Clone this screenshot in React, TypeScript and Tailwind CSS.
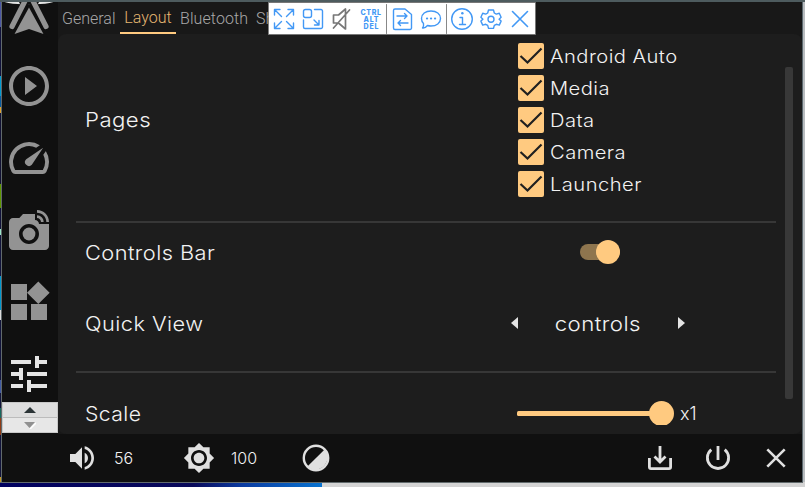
import React from "react";
import {
  MdPlayCircleOutline, MdSpeed, MdLinkedCamera, MdWidgets, MdTune, MdVolumeUp, MdBrightness7,
} from "react-icons/md";

const body = "font-[Inter,'Liberation_Sans',sans-serif] font-[330] text-[#f2f2f2] whitespace-nowrap";

function AutoLogo() {
  return (
    <svg width="56" height="36" viewBox="0 0 56 36" className="block shrink-0">
      <ellipse cx="27" cy="-3" rx="29" ry="5.500" fill="#e4e4e4" />
      <path d="M17 0h20l-4 8-6-6-6 6z" fill="#101010" />
      <path d="M23.500-2L10 24.500M30.500-2L44 24.500" stroke="#939393" strokeWidth="5.200" strokeLinecap="round" />
      <path d="M27 5.500L41.500 32 27 27 12.500 32z" fill="#939393" stroke="#101010" strokeWidth="4" paintOrder="stroke" />
    </svg>
  );
}

function Sidebar() {
  return (
    <nav className="flex w-14 shrink-0 flex-col bg-[#101010] text-[#939393]">
      <div className="h-[60px] shrink-0 overflow-hidden"><AutoLogo /></div>
      <div className="flex flex-col items-center gap-6 pr-[2px]">
        <MdPlayCircleOutline size={48} />
        <MdSpeed size={48} />
        <MdLinkedCamera size={48} />
        <MdWidgets size={48} />
        <MdTune size={48} className="text-[#e4e4e4]" />
      </div>
      <div className="mt-1 flex h-[31px] shrink-0 flex-col border border-[#c8c8c8]">
        <div className="flex flex-1 items-center justify-center border-b border-[#bcbcbc] bg-[#dedede] pr-px">
          <svg width="12" height="6"><path d="M0 6L6 0l6 6z" fill="#2b3436" /></svg>
        </div>
        <div className="flex flex-1 items-center justify-center bg-[#e7e7e7]">
          <svg width="12" height="7"><path d="M6 7l6-6" stroke="#fff" strokeWidth="1.500" /><path d="M0 0h11L5.500 6z" fill="#909090" /></svg>
        </div>
      </div>
    </nav>
  );
}

function Tabs() {
  return (
    <div className="flex h-8 shrink-0 rounded-tl-lg bg-[#181818] pl-1 font-[Roboto,sans-serif] text-base leading-[33px] font-light whitespace-nowrap text-[#a8a8a8]">
      <span className="w-[58px]">General</span>
      <span className="flex w-14 justify-center border-b-2 border-[#ffca80] leading-[32px] text-[#e5b672]">Layout</span>
      <span className="w-20 pl-1 tracking-[0.1px]">Bluetooth</span>
      <span>Shortcuts</span>
    </div>
  );
}

function RemoteToolbar() {
  return (
    <svg width="268" height="33" viewBox="0 0 268 33" className="absolute top-[2px] left-[268px]" fill="none" stroke="#4298f5" strokeWidth="1.400" strokeLinecap="round" strokeLinejoin="round">
      <rect x=".5" y=".5" width="267" height="32" fill="#fff" stroke="#777" strokeWidth="1" />
      <g transform="translate(0 1)">
        <path d="M6.500 12V6.500H12M6.500 6.500l7 7M20 6.500h5.500V12M25.500 6.500l-7 7M6.500 20v5.500H12M6.500 25.500l7-7M20 25.500h5.500V20M25.500 25.500l-7-7" />
        <path d="M46.500 6.500H53a1.500 1.500 0 0 1 1.500 1.500v16a1.500 1.500 0 0 1-1.500 1.500H37a1.500 1.500 0 0 1-1.500-1.500v-7M46 17l5 5M51 17.500V22h-4.500" />
        <rect x="35.500" y="6.500" width="8" height="8" rx="2" />
        <path d="M65.500 12h5l7-6v20l-7-6h-5zM81.500 7l-16 18" stroke="#777" strokeWidth="1.700" />
        <g fill="#4298f5" stroke="none" fontFamily="Inter" fontSize="7" fontWeight="800">
          <text x="92.500" y="11.500" textLength="20.500">CTRL</text>
          <text x="95.500" y="18.500" textLength="15">ALT</text>
          <text x="95.500" y="25.500" textLength="15">DEL</text>
        </g>
        <path d="M118.500 1.500v29M178.500 1.500v29" stroke="#888" strokeWidth="1" />
        <path d="M127 6h10l6.500 5.500V25a1.500 1.500 0 0 1-1.500 1.500h-15a1.500 1.500 0 0 1-1.500-1.500V7.500A1.500 1.500 0 0 1 127 6zM129 13h10l-2.500-2.500M139 13l-2.500 2.500M140 20h-10l2.500-2.500M130 20l2.500 2.500" />
        <path d="M163 8c5.500 0 9.500 3 9.500 7.500S168.500 23 163 23q-2 0-3.500-.5Q157 25.500 154.500 25q1.500-2 1-4.500Q153.500 18.500 153.500 15.500C153.500 11 157.500 8 163 8z" />
        <path d="M159 15.500h.1M163 15.500h.1M167 15.500h.1" strokeWidth="2.200" />
        <circle cx="194" cy="16" r="10.300" />
        <path d="M194.300 10.300h.1" strokeWidth="2.400" /><path d="M192 14.500h2.500v7M191.500 21.500h6" />
        <path d="M220.500 7h5l.8 3 2 1.100 3-.8 1.800 4-2 1.900 2 1.900-1.800 4-3-.8-2 1.100-.8 3h-5l-.8-3-2-1.100-3 .8-1.800-4 2-1.900-2-1.900 1.800-4 3 .8 2-1.100z" />
        <circle cx="223" cy="16.200" r="3" />
        <path d="M244.500 8.500l15 15M259.500 8.500l-15 15" strokeWidth="1.600" />
      </g>
    </svg>
  );
}

const pages = ["Android Auto", "Media", "Data", "Camera", "Launcher"];

function Settings() {
  return (
    <main className="flex h-[400px] overflow-hidden rounded-lg bg-[#1d1d1d]">
      <div className={"flex w-[727px] shrink-0 flex-col pl-[18px] text-[20px] " + body}>
        <section className="flex h-[187px] w-[700px] shrink-0 pl-[9px]">
          <span className="w-[433px] pt-[71px] leading-[30px] tracking-[0.4px]"><span className="inline-block origin-left scale-x-[1.11]">Pages</span></span>
          <div className="flex flex-col gap-[6px] pt-[9px]">
            {pages.map((p) => (
              <div key={p} className="flex h-[26px] items-center gap-[6px] text-[18px]">
                <span className="flex size-[26px] items-center justify-center rounded-[2px] bg-[#ffca80]">
                  <svg width="26" height="26" fill="none" stroke="#202020" strokeWidth="2.200"><path d="M2.500 13l7 6.500L23.500 5.500" /></svg>
                </span>
                <span className="inline-block origin-left scale-x-[1.12] tracking-[0.4px]">{p}</span>
              </div>
            ))}
          </div>
        </section>
        <div className="h-[2px] w-[700px] shrink-0 bg-[#373737]" />
        <section className="flex h-[58px] shrink-0 items-center pl-[9px]">
          <span className="w-[495px] pt-px tracking-[0.4px]"><span className="inline-block origin-left scale-x-[1.09]">Controls Bar</span></span>
          <div className="flex h-4 w-10 items-center justify-end rounded-full bg-[#8e754e]">
            <span className="size-6 shrink-0 rounded-full bg-[#ffca80]" />
          </div>
        </section>
        <section className="flex h-[90px] shrink-0 items-center pb-[6px] pl-[9px]">
          <span className="w-[426px] pt-px tracking-[0.4px]"><span className="inline-block origin-left scale-x-[1.09]">Quick View</span></span>
          <svg width="7" height="12"><path d="M7 0v12L0 6z" fill="#e4e4e4" /></svg>
          <span className="w-[160px] pt-px text-center tracking-[0.4px]"><span className="inline-block scale-x-[1.11]">controls</span></span>
          <svg width="7" height="12"><path d="M0 0v12l7-6z" fill="#e4e4e4" /></svg>
        </section>
        <div className="h-[2px] w-[700px] shrink-0 bg-[#373737]" />
        <section className="flex h-[80px] shrink-0 items-center pl-[9px]">
          <span className="w-[432px] pt-px tracking-[0.4px]"><span className="inline-block origin-left scale-x-[1.06]">Scale</span></span>
          <svg width="157" height="24"><rect y="10" width="145" height="5" rx="1.500" fill="#ffca80" /><circle cx="144.500" cy="12.500" r="12.500" fill="#ffca80" /></svg>
          <span className="pl-[6px] text-[18px]">x1</span>
        </section>
      </div>
      <div className="mt-[33px] h-[332px] w-2 rounded-[2px] bg-[#383838]" />
    </main>
  );
}

function ControlsBar() {
  return (
    <footer className={"flex h-12 shrink-0 items-center rounded-b-lg bg-[#101010] pl-16 pr-[10px] text-[16px] " + body}>
      <MdVolumeUp size={32} color="#e0e0e0" />
      <span className="w-[85px] pl-4">56</span>
      <MdBrightness7 size={32} color="#e0e0e0" />
      <span className="w-[85px] pl-4">100</span>
      <svg width="32" height="32" fill="none"><circle cx="16" cy="16" r="12.200" stroke="#e0e0e0" strokeWidth="2.400" /><path d="M24.600 7.400A12.200 12.200 0 0 1 7.400 24.600z" fill="#e0e0e0" /></svg>
      <div className="ml-auto flex gap-[26px]">
        <svg width="32" height="32" fill="none" stroke="#e0e0e0" strokeWidth="2.800"><path d="M16 4v15M10.500 14.500l5.500 5.500 5.500-5.500M5.400 16v9a1.600 1.600 0 0 0 1.600 1.600h18a1.600 1.600 0 0 0 1.600-1.600v-9" /></svg>
        <svg width="32" height="32" fill="none" stroke="#e0e0e0" strokeWidth="2.800"><path d="M16 4v14M9.300 7.700a10.600 10.600 0 1 0 13.400 0" /></svg>
        <svg width="32" height="32" fill="none" stroke="#e0e0e0" strokeWidth="2.600"><path d="M7.300 7.300l17.400 17.400M24.700 7.300L7.300 24.700" /></svg>
      </div>
    </footer>
  );
}

const edge = [
  [0, 25, "#4c57a5"], [25, 49, "#10113a"], [74, 20, "#009bd1"], [94, 11, "#075ba1"], [105, 6, "#e0a22d"],
  [111, 71, "#111133"], [182, 24, "#5f9700"], [206, 21, "#10113a"], [227, 6, "#9ae8c9"], [233, 41, "#11133a"],
  [274, 34, "#0098cf"], [308, 10, "#ddd"], [318, 60, "#11133a"], [378, 13, "#405aa3"], [391, 15, "#11133a"],
  [406, 10, "#17695e"], [416, 17, "#903b14"], [433, 42, "#11133a"], [475, 8, "#c39821"],
] as const;

export default function App() {
  return (
    <div className="relative flex h-[487px] w-[805px] flex-col overflow-hidden bg-[#d4d4d4]">
      <div className="h-[2px] shrink-0 bg-[#4d5b5e]" />
      <div className="flex h-[480px] shrink-0">
        <svg width="2" height="480" className="shrink-0">
          {edge.map(([y, h, c]) => <rect key={y} y={y} width="1" height={h} fill={c} />)}
          <rect x="1" width="1" height="480" fill="#626a6c" />
        </svg>
        <div className="flex w-[800px] shrink-0 flex-col bg-[#101010]">
          <div className="flex h-[432px] shrink-0">
            <Sidebar />
            <div className="flex w-[744px] flex-col bg-[#181818]"><Tabs /><Settings /></div>
          </div>
          <ControlsBar />
        </div>
        <div className="w-[3px] border-l border-[#59666c] bg-[#b9bdc0]" />
      </div>
      <div className="h-px w-[803px] shrink-0 bg-[#626b6d]" />
      <div className="h-1 w-[322px] bg-[linear-gradient(90deg,#000060_0%,#09095a_60%,#0a3aa0_75%,#0873d0_100%)]" />
      <RemoteToolbar />
    </div>
  );
}
